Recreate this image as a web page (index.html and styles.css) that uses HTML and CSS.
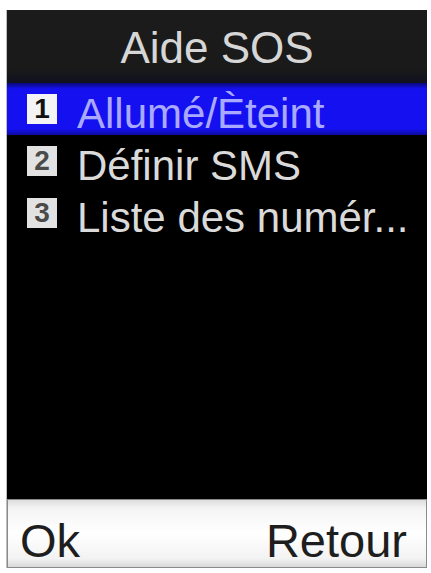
FILE: index.html
```html
<!DOCTYPE html>
<html lang="fr">
<head>
<meta charset="utf-8">
<title>Aide SOS</title>
<link rel="stylesheet" href="styles.css">
</head>
<body>
<div class="screen">
  <div class="header">Aide SOS</div>
  <div class="menu">
    <div class="row selected"><span class="num">1</span><span class="label">Allumé/Èteint</span></div>
    <div class="row"><span class="num">2</span><span class="label">Définir SMS</span></div>
    <div class="row"><span class="num">3</span><span class="label">Liste des numér...</span></div>
  </div>
  <div class="softkeys"><span>Ok</span><span>Retour</span></div>
</div>
</body>
</html>
```
FILE: styles.css
```css
html, body {
  margin: 0;
  padding: 0;
  background: #ffffff;
}
body {
  width: 431px;
  height: 573px;
  overflow: hidden;
  font-family: "Liberation Sans", Arial, sans-serif;
}
.screen {
  margin: 10px 0 0 7px;
  width: 420px;
  height: 558px;
  background: #000;
  display: flex;
  flex-direction: column;
  box-shadow: -1px 0 0 #bdbdbd;
}
.header {
  height: 73px;
  box-sizing: border-box;
  padding-top: 2px;
  line-height: 71px;
  text-align: center;
  font-size: 44px;
  color: #d6d6d6;
  background: linear-gradient(#1b1b1b 0, #1a1a1a 80%, #101020 100%);
}
.menu {
  flex: 1;
  display: flex;
  flex-direction: column;
}
.row {
  height: 52px;
  display: flex;
  align-items: center;
  color: #dadada;
}
.row.selected {
  background: linear-gradient(#0a0a7a 0, #1410f0 6px, #1410f0 46px, #0c0a9a 52px);
  color: #a9a9ff;
}
.num {
  width: 30px;
  height: 30px;
  margin: 0 20px 0 20px;
  background: #e2e2e2;
  color: #4a4a4a;
  font-size: 28px;
  font-weight: bold;
  line-height: 30px;
  text-align: center;
}
.selected .num {
  background: #f4f4f4;
  color: #111;
}
.label {
  padding-top: 10px;
  line-height: 42px;
  font-size: 42px;
  white-space: nowrap;
}
.softkeys {
  height: 69px;
  box-sizing: border-box;
  border: 1px solid #8a8a8a;
  background: linear-gradient(#dcdcdc 0, #f4f4f4 12%, #ffffff 50%, #f2f2f2 88%, #d8d8d8 100%);
  display: flex;
  justify-content: space-between;
  padding: 14px 19px 0 12px;
  line-height: 53px;
  font-size: 47px;
  color: #1e1e1e;
}
```
